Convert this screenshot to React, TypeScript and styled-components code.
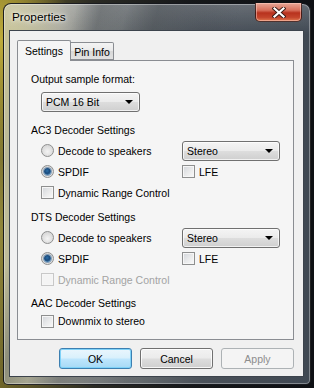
import React from "react";
import styled, { createGlobalStyle, css } from "styled-components";

const GlobalStyle = createGlobalStyle`
  html, body {
    margin: 0;
    padding: 0;
    width: 314px;
    height: 388px;
    overflow: hidden;
    background: #111;
  }
  * { box-sizing: border-box; }
`;

const Desktop = styled.div`
  width: 314px;
  height: 388px;
  padding: 3px;
  background:
    radial-gradient(ellipse 70px 120px at 0px 40px, rgba(200, 180, 60, 0.9), rgba(200, 180, 60, 0) 100%),
    radial-gradient(ellipse 40px 160px at 0px 230px, rgba(150, 140, 60, 0.9), rgba(150, 140, 60, 0) 100%),
    linear-gradient(to right, #6e6428 0%, #2a2a24 30%, #16181a 60%, #0e1014 100%);
  font-family: "Liberation Sans", Arial, sans-serif;
`;

const Window = styled.div`
  width: 308px;
  height: 382px;
  border: 1px solid rgba(10, 12, 16, 0.85);
  border-radius: 8px 8px 5px 5px;
  padding: 0 6px 7px 5px;
  display: flex;
  flex-direction: column;
  background:
    linear-gradient(
      105deg,
      rgba(60, 66, 72, 0) 0px,
      rgba(60, 66, 72, 0) 70px,
      rgba(60, 66, 72, 0.35) 95px,
      rgba(60, 66, 72, 0.1) 120px,
      rgba(60, 66, 72, 0.4) 150px,
      rgba(60, 66, 72, 0.15) 190px,
      rgba(60, 66, 72, 0) 230px
    ),
    linear-gradient(to bottom, rgba(255, 255, 255, 0.18), rgba(255, 255, 255, 0) 30px),
    linear-gradient(
      to right,
      rgba(205, 205, 180, 0.78) 0%,
      rgba(210, 212, 210, 0.7) 18%,
      rgba(150, 158, 165, 0.62) 40%,
      rgba(110, 120, 132, 0.6) 65%,
      rgba(95, 108, 122, 0.62) 100%
    );
  box-shadow: inset 0 0 0 1px rgba(255, 255, 255, 0.35);
`;

const TitleBar = styled.div`
  height: 26px;
  display: flex;
  align-items: flex-start;
  justify-content: space-between;
  padding-left: 3px;
`;

const Title = styled.div`
  font-family: "Liberation Sans", Arial, sans-serif;
  font-size: 11.8px;
  color: #000;
  line-height: 26px;
  text-shadow: 0 0 6px rgba(255, 255, 255, 0.95), 0 0 3px rgba(255, 255, 255, 0.85);
`;

const CloseButton = styled.div`
  width: 47px;
  height: 19px;
  margin-top: -1px;
  margin-right: 2px;
  border: 1px solid rgba(40, 20, 20, 0.8);
  border-top: none;
  border-radius: 0 0 5px 5px;
  background: linear-gradient(
    to bottom,
    #e8a898 0%,
    #d7705c 40%,
    #b8321e 55%,
    #c4452c 80%,
    #e07a50 100%
  );
  box-shadow: inset 0 0 0 1px rgba(255, 210, 200, 0.5);
  display: flex;
  align-items: center;
  justify-content: center;
`;

const Client = styled.div`
  flex: 1;
  border: 1px solid rgba(40, 48, 58, 0.9);
  background: #f0f0f0;
  padding: 9px 9px 7px 7px;
  display: flex;
  flex-direction: column;
`;

const TabStrip = styled.div`
  height: 20px;
  display: flex;
  align-items: flex-start;
  position: relative;
  z-index: 1;
`;

const Tab = styled.div<{ $active?: boolean }>`
  font-size: 10.5px;
  color: #000;
  display: flex;
  align-items: center;
  justify-content: center;
  border: 1px solid #8a8d92;
  ${(p) =>
    p.$active
      ? css`
          width: 54px;
          height: 21px;
          border-bottom: none;
          background: #f5f5f5;
          border-radius: 2px 2px 0 0;
        `
      : css`
          width: 43px;
          height: 18px;
          margin-top: 2px;
          border-left: none;
          background: linear-gradient(to bottom, #f4f4f4 0%, #e9e9e9 50%, #d8d8d8 51%, #e2e2e2 100%);
          border-radius: 0 2px 0 0;
          padding-top: 1px;
        `}
`;

const Panel = styled.div`
  width: 277px;
  height: 280px;
  border: 1px solid #8a8d92;
  background: #f5f5f5;
  padding: 8px 0 0 13px;
  display: flex;
  flex-direction: column;
`;

const Label = styled.div<{ $height?: number; $gap?: number }>`
  height: ${(p) => p.$height ?? 21}px;
  margin-top: ${(p) => p.$gap ?? 0}px;
  display: flex;
  align-items: center;
  font-size: 10.5px;
  color: #000;
  white-space: nowrap;
`;

const FormatPicker = styled.div`
  margin: 3px 0 0 10px;
  display: flex;
`;

const Combo = styled.div<{ $width: number }>`
  width: ${(p) => p.$width}px;
  height: 20px;
  border: 1px solid #707070;
  border-radius: 3px;
  background: linear-gradient(to bottom, #f4f4f4 0%, #ebebeb 48%, #dddddd 52%, #cfcfcf 100%);
  box-shadow: inset 0 0 0 1px rgba(255, 255, 255, 0.7);
  display: flex;
  align-items: center;
  justify-content: space-between;
  padding: 0 4px;
  font-size: 10.5px;
  color: #000;
`;

const Arrow = styled.span`
  width: 0;
  height: 0;
  border-left: 4px solid transparent;
  border-right: 4px solid transparent;
  border-top: 4px solid #000;
  margin-right: 2px;
`;

const OptionGrid = styled.div<{ $row?: number }>`
  display: grid;
  grid-template-columns: 141px 98px;
  grid-auto-rows: ${(p) => p.$row ?? 21}px;
  margin-left: 10px;
`;

const Option = styled.label<{ $disabled?: boolean }>`
  display: flex;
  align-items: center;
  gap: 4px;
  font-size: 10.5px;
  color: ${(p) => (p.$disabled ? "#a3a3a3" : "#000")};
  white-space: nowrap;
`;

const Cell = styled.div`
  display: flex;
  align-items: center;
`;

const Radio = styled.span<{ $checked?: boolean }>`
  width: 13px;
  height: 13px;
  border-radius: 50%;
  border: 1px solid #8e8f8f;
  background: radial-gradient(circle at 50% 60%, #f4f4f4 0%, #dcdcdc 60%, #cfcfcf 100%);
  display: flex;
  align-items: center;
  justify-content: center;
  flex: none;
  &::after {
    content: "";
    display: ${(p) => (p.$checked ? "block" : "none")};
    width: 7px;
    height: 7px;
    border-radius: 50%;
    background: radial-gradient(circle at 45% 40%, #2a6ea8 0%, #1a4a7c 45%, #6fb2e0 100%);
    box-shadow: 0 0 0 1px rgba(40, 90, 140, 0.5);
  }
`;

const Check = styled.span<{ $disabled?: boolean }>`
  width: 13px;
  height: 13px;
  flex: none;
  border: 1px solid ${(p) => (p.$disabled ? "#c8c8c8" : "#8e8f8f")};
  background: ${(p) =>
    p.$disabled
      ? "#f4f4f4"
      : "linear-gradient(135deg, #d2d5da 0%, #e8e9ea 50%, #fafafa 100%)"};
  box-shadow: inset 0 0 0 1px #f6f6f6;
`;

const ButtonRow = styled.div`
  margin-top: 8px;
  height: 21px;
  display: flex;
  justify-content: flex-end;
  gap: 8px;
`;

const Button = styled.div<{ $variant?: "default" | "disabled" }>`
  width: 73px;
  height: 21px;
  border-radius: 3px;
  display: flex;
  align-items: center;
  justify-content: center;
  font-size: 10.5px;
  ${(p) =>
    p.$variant === "disabled"
      ? css`
          border: 1px solid #adb2b5;
          background: #f4f4f4;
          color: #8d8d8d;
        `
      : p.$variant === "default"
      ? css`
          border: 1px solid #3c7fb1;
          background: linear-gradient(to bottom, #eaf6fd 0%, #d9f0fc 48%, #bee6fd 52%, #a7d9f5 100%);
          box-shadow: inset 0 0 0 1px #7fd2f8;
          color: #000;
        `
      : css`
          border: 1px solid #707070;
          background: linear-gradient(to bottom, #f2f2f2 0%, #ebebeb 48%, #dddddd 52%, #cfcfcf 100%);
          box-shadow: inset 0 0 0 1px rgba(255, 255, 255, 0.8);
          color: #000;
        `}
`;

const CloseGlyph = () => (
  <svg width="14" height="11" viewBox="0 0 14 11">
    <path d="M2.5 1.5 L11.5 9.5 M11.5 1.5 L2.5 9.5" stroke="#3a1a14" strokeWidth="4" strokeLinecap="square" />
    <path d="M2.5 1.5 L11.5 9.5 M11.5 1.5 L2.5 9.5" stroke="#ffffff" strokeWidth="2.2" strokeLinecap="square" />
  </svg>
);

type DecoderProps = { title: string; gap: number; drcDisabled?: boolean };

const DecoderSection: React.FC<DecoderProps> = ({ title, gap, drcDisabled }) => (
  <>
    <Label $gap={gap}>{title}</Label>
    <OptionGrid>
      <Option>
        <Radio />
        Decode to speakers
      </Option>
      <Cell>
        <Combo $width={98}>
          Stereo
          <Arrow />
        </Combo>
      </Cell>
      <Option>
        <Radio $checked />
        SPDIF
      </Option>
      <Option>
        <Check />
        LFE
      </Option>
      <Option $disabled={drcDisabled}>
        <Check $disabled={drcDisabled} />
        Dynamic Range Control
      </Option>
    </OptionGrid>
  </>
);

export default function App() {
  return (
    <>
      <GlobalStyle />
      <Desktop>
        <Window>
          <TitleBar>
            <Title>Properties</Title>
            <CloseButton>
              <CloseGlyph />
            </CloseButton>
          </TitleBar>
          <Client>
            <TabStrip>
              <Tab $active>Settings</Tab>
              <Tab>Pin Info</Tab>
            </TabStrip>
            <Panel>
              <Label $height={20}>Output sample format:</Label>
              <FormatPicker>
                <Combo $width={99}>
                  PCM 16 Bit
                  <Arrow />
                </Combo>
              </FormatPicker>
              <DecoderSection title="AC3 Decoder Settings" gap={7} />
              <DecoderSection title="DTS Decoder Settings" gap={3} drcDisabled />
              <Label $gap={2}>AAC Decoder Settings</Label>
              <OptionGrid $row={16}>
                <Option>
                  <Check />
                  Downmix to stereo
                </Option>
              </OptionGrid>
            </Panel>
            <ButtonRow>
              <Button $variant="default">OK</Button>
              <Button>Cancel</Button>
              <Button $variant="disabled">Apply</Button>
            </ButtonRow>
          </Client>
        </Window>
      </Desktop>
    </>
  );
}
